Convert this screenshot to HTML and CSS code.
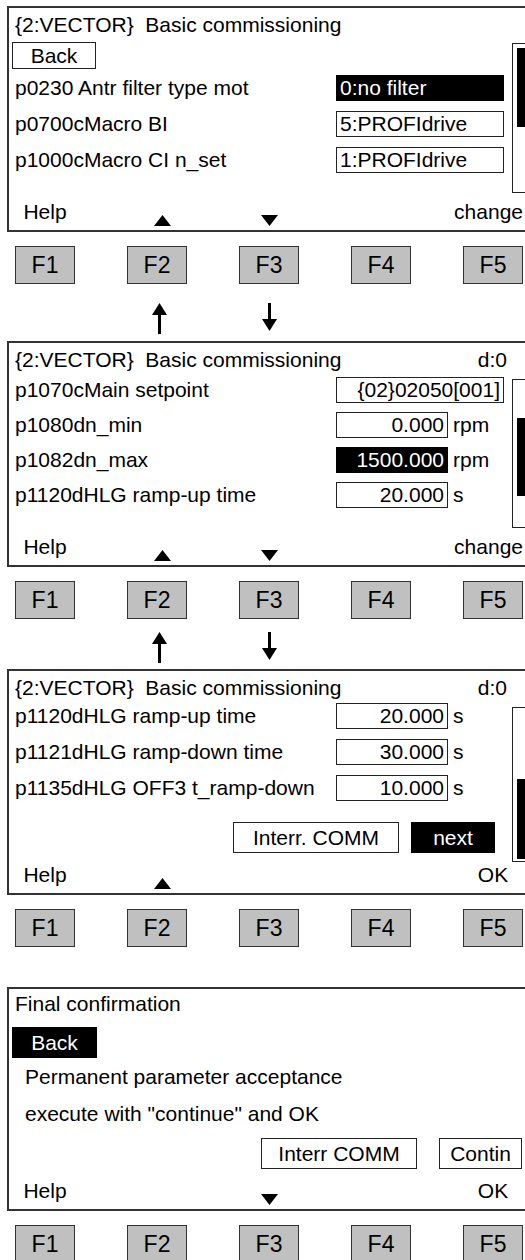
FILE: index.html
```html
<!DOCTYPE html>
<html lang="en">
<head>
    <meta charset="UTF-8">
    <meta name="viewport" content="width=device-width, initial-scale=1.0">
    <title>Basic commissioning</title>
    <link rel="stylesheet" href="styles.css">
</head>
<body>
    <div class="screen">

        <!-- screen 1: macros -->
        <section class="panel basic-1">
            <div class="title"><span>{2:VECTOR}&nbsp; Basic commissioning</span></div>
            <div class="body">
                <div class="list">
                    <div class="btn back">Back</div>
                    <div class="row"><span class="label">p0230 Antr filter type mot</span><span class="val text active">0:no filter</span></div>
                    <div class="row"><span class="label">p0700cMacro BI</span><span class="val text">5:PROFIdrive</span></div>
                    <div class="row"><span class="label">p1000cMacro CI n_set</span><span class="val text">1:PROFIdrive</span></div>
                </div>
                <div class="scroll"><div class="thumb"></div></div>
            </div>
            <div class="softkeys">
                <span class="cell">Help</span>
                <span class="cell tri-cell"><svg class="tri up" width="17" height="11" viewBox="0 0 17 11"><polygon points="0,11 8.5,0 17,11"/></svg></span>
                <span class="cell tri-cell"><svg class="tri" width="17" height="11" viewBox="0 0 17 11"><polygon points="0,0 17,0 8.5,11"/></svg></span>
                <span class="cell"></span>
                <span class="cell end">change</span>
            </div>
        </section>
        <div class="fkeys">
            <div class="key">F1</div>
            <div class="key">F2</div>
            <div class="key">F3</div>
            <div class="key">F4</div>
            <div class="key">F5</div>
        </div>
        <div class="arrows">
            <div class="slot"></div>
            <div class="slot"><svg class="arrow-up" width="15" height="31" viewBox="0 0 15 31"><polygon points="0,12 7.5,0 15,12"/><rect x="6" y="11" width="3" height="20"/></svg></div>
            <div class="slot"><svg width="15" height="31" viewBox="0 0 15 31"><rect x="6" y="0" width="3" height="17"/><polygon points="0,16 15,16 7.5,28"/></svg></div>
        </div>

        <!-- screen 2: speed limits -->
        <section class="panel basic-2">
            <div class="title"><span>{2:VECTOR}&nbsp; Basic commissioning</span><span>d:0</span></div>
            <div class="body">
                <div class="list">
                    <div class="row"><span class="label">p1070cMain setpoint</span><span class="val text right">{02}02050[001]</span></div>
                    <div class="row"><span class="label">p1080dn_min</span><span class="val num">0.000</span><span class="unit">rpm</span></div>
                    <div class="row"><span class="label">p1082dn_max</span><span class="val num active">1500.000</span><span class="unit">rpm</span></div>
                    <div class="row"><span class="label">p1120dHLG ramp-up time</span><span class="val num">20.000</span><span class="unit">s</span></div>
                </div>
                <div class="scroll"><div class="thumb"></div></div>
            </div>
            <div class="softkeys">
                <span class="cell">Help</span>
                <span class="cell tri-cell"><svg class="tri up" width="17" height="11" viewBox="0 0 17 11"><polygon points="0,11 8.5,0 17,11"/></svg></span>
                <span class="cell tri-cell"><svg class="tri" width="17" height="11" viewBox="0 0 17 11"><polygon points="0,0 17,0 8.5,11"/></svg></span>
                <span class="cell"></span>
                <span class="cell end">change</span>
            </div>
        </section>
        <div class="fkeys">
            <div class="key">F1</div>
            <div class="key">F2</div>
            <div class="key">F3</div>
            <div class="key">F4</div>
            <div class="key">F5</div>
        </div>
        <div class="arrows second">
            <div class="slot"></div>
            <div class="slot"><svg class="arrow-up" width="15" height="31" viewBox="0 0 15 31"><polygon points="0,12 7.5,0 15,12"/><rect x="6" y="11" width="3" height="20"/></svg></div>
            <div class="slot"><svg width="15" height="31" viewBox="0 0 15 31"><rect x="6" y="0" width="3" height="17"/><polygon points="0,16 15,16 7.5,28"/></svg></div>
        </div>

        <!-- screen 3: ramp times -->
        <section class="panel basic-3">
            <div class="title"><span>{2:VECTOR}&nbsp; Basic commissioning</span><span>d:0</span></div>
            <div class="body">
                <div class="list">
                    <div class="row"><span class="label">p1120dHLG ramp-up time</span><span class="val num">20.000</span><span class="unit">s</span></div>
                    <div class="row"><span class="label">p1121dHLG ramp-down time</span><span class="val num">30.000</span><span class="unit">s</span></div>
                    <div class="row"><span class="label">p1135dHLG OFF3 t_ramp-down</span><span class="val num">10.000</span><span class="unit">s</span></div>
                    <div class="actions">
                        <div class="btn interr">Interr. COMM</div>
                        <div class="btn next">next</div>
                    </div>
                </div>
                <div class="scroll"><div class="thumb"></div></div>
            </div>
            <div class="softkeys">
                <span class="cell">Help</span>
                <span class="cell tri-cell"><svg class="tri up" width="17" height="11" viewBox="0 0 17 11"><polygon points="0,11 8.5,0 17,11"/></svg></span>
                <span class="cell"></span>
                <span class="cell"></span>
                <span class="cell">OK</span>
            </div>
        </section>
        <div class="fkeys">
            <div class="key">F1</div>
            <div class="key">F2</div>
            <div class="key">F3</div>
            <div class="key">F4</div>
            <div class="key">F5</div>
        </div>

        <!-- screen 4: final confirmation -->
        <section class="panel final">
            <div class="title"><span>Final confirmation</span></div>
            <div class="body">
                <div class="list">
                    <div class="btn back active">Back</div>
                    <div class="line">Permanent parameter acceptance</div>
                    <div class="line">execute with "continue" and OK</div>
                    <div class="actions">
                        <div class="btn interr">Interr COMM</div>
                        <div class="btn contin">Contin</div>
                    </div>
                </div>
            </div>
            <div class="softkeys">
                <span class="cell">Help</span>
                <span class="cell"></span>
                <span class="cell tri-cell"><svg class="tri" width="17" height="11" viewBox="0 0 17 11"><polygon points="0,0 17,0 8.5,11"/></svg></span>
                <span class="cell"></span>
                <span class="cell">OK</span>
            </div>
        </section>
        <div class="fkeys">
            <div class="key">F1</div>
            <div class="key">F2</div>
            <div class="key">F3</div>
            <div class="key">F4</div>
            <div class="key">F5</div>
        </div>

    </div>
</body>
</html>
```

FILE: styles.css
```css
body {
    margin: 0;
    font-family: "Liberation Sans", Arial, sans-serif;
    font-size: 21px;
    color: #000;
    background-color: #fff;
    overflow: hidden;
}
.screen {
    padding: 6px 0 0 7px;
}
/* the display runs on past the right edge of the picture */
.panel {
    width: 518px;
    height: 226px;
    border: 2px solid #333;
    border-right: none;
    box-sizing: border-box;
    display: flex;
    flex-direction: column;
    overflow: hidden;
}
.title {
    width: 498px;
    box-sizing: border-box;
    padding: 3px 0 0 6px;
    line-height: 28px;
    display: flex;
    justify-content: space-between;
    white-space: nowrap;
}
.body {
    flex: 1;
    min-height: 0;
    display: flex;
    align-items: flex-start;
}
.list {
    width: 503px;
    flex-shrink: 0;
    display: flex;
    flex-direction: column;
}
.row {
    height: 26px;
    display: flex;
    align-items: center;
    white-space: nowrap;
}
.row + .row {
    margin-top: 10px;
}
.label {
    width: 327px;
    flex-shrink: 0;
    padding-left: 6px;
    box-sizing: border-box;
}
.val {
    height: 26px;
    flex-shrink: 0;
    box-sizing: border-box;
    border: 1px solid #222;
    line-height: 24px;
    padding: 0 3px;
    white-space: nowrap;
}
.val.text {
    width: 168px;
}
.val.right {
    text-align: right;
}
.val.num {
    width: 112px;
    text-align: right;
}
.val.active {
    background-color: #000;
    color: #fff;
    border-color: #000;
}
.unit {
    margin-left: 5px;
}
.btn {
    flex-shrink: 0;
    box-sizing: border-box;
    border: 1px solid #222;
    text-align: center;
    white-space: nowrap;
}
.btn.active,
.btn.next {
    background-color: #000;
    color: #fff;
    border-color: #000;
}
.back {
    width: 84px;
    height: 27px;
    line-height: 25px;
    margin: 3px 0 6px 3px;
}
.actions {
    display: flex;
}
.actions .btn {
    height: 31px;
    line-height: 29px;
}
.scroll {
    flex: 1;
    box-sizing: border-box;
    border: 1px solid #222;
    border-right: none;
    padding-left: 4px;
}
.thumb {
    background-color: #000;
}
.softkeys {
    display: flex;
    gap: 52px;
    height: 28px;
    padding: 0 0 4px 6px;
}
.cell {
    width: 60px;
    flex-shrink: 0;
    display: flex;
    justify-content: center;
    align-items: center;
    white-space: nowrap;
    line-height: 28px;
}
.cell.end {
    justify-content: flex-end;
}
.tri-cell {
    align-items: flex-end;
}
.tri {
    display: block;
}
.tri.up {
    margin-left: 10px;
}
.fkeys {
    display: flex;
    gap: 52px;
    padding-left: 8px;
    margin-top: 14px;
}
.key {
    width: 60px;
    height: 38px;
    flex-shrink: 0;
    box-sizing: border-box;
    border: 1px solid #333;
    background-color: #c0c0c0;
    display: flex;
    align-items: center;
    justify-content: center;
    font-size: 23px;
}
.arrows {
    display: flex;
    gap: 52px;
    padding-left: 8px;
    height: 31px;
    margin: 19px 0 7px;
}
.arrows.second {
    margin: 13px 0 6px;
}
.slot {
    width: 60px;
    display: flex;
    justify-content: center;
}
.arrow-up {
    margin-left: 4px;
}

/* screen 1 */
.basic-1 .scroll {
    margin-top: 4px;
    height: 150px;
}
.basic-1 .thumb {
    margin-top: 4px;
    height: 79px;
}

/* screen 2 */
.basic-2 .list {
    padding-top: 3px;
}
.basic-2 .row + .row {
    margin-top: 9px;
}
.basic-2 .scroll {
    margin-top: 5px;
    height: 149px;
}
.basic-2 .thumb {
    margin-top: 38px;
    height: 78px;
}

/* screen 3 */
.basic-3 .list {
    padding-top: 1px;
}
.basic-3 .actions {
    margin-top: 21px;
    padding-left: 224px;
    gap: 12px;
}
.basic-3 .interr {
    width: 166px;
}
.basic-3 .next {
    width: 84px;
}
.basic-3 .scroll {
    margin-top: 5px;
    height: 155px;
}
.basic-3 .thumb {
    margin-top: 71px;
    height: 80px;
}

/* screen 4 */
.final {
    height: 224px;
    margin-top: 40px;
}
.final .title {
    padding-top: 1px;
}
.final .back {
    height: 31px;
    line-height: 29px;
    margin: 9px 0 0 3px;
    width: 85px;
}
.final .line {
    line-height: 37px;
    padding-left: 16px;
}
.final .actions {
    margin-top: 6px;
    padding-left: 252px;
    gap: 22px;
}
.final .interr {
    width: 156px;
}
.final .contin {
    width: 83px;
}
```
